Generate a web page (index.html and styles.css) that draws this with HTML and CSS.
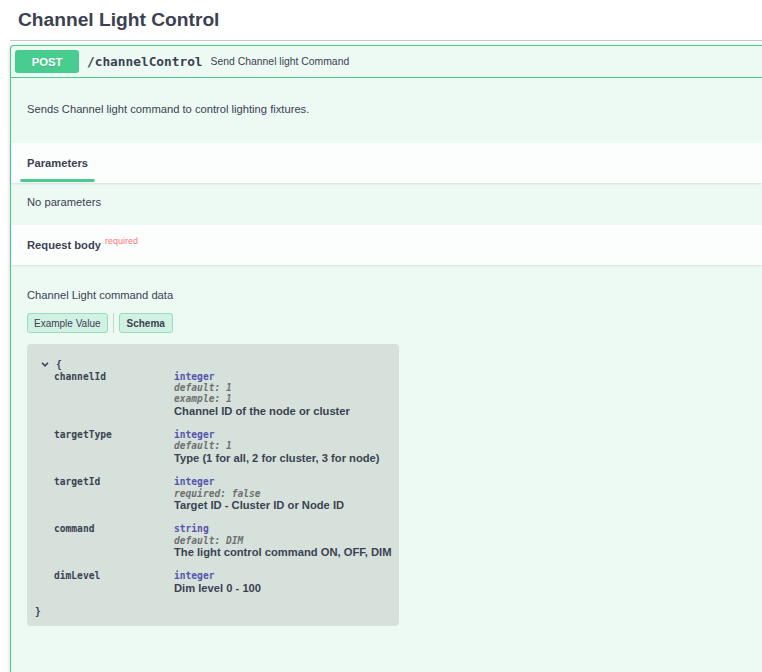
FILE: index.html
```html
<!DOCTYPE html>
<html lang="en">
<head>
<meta charset="utf-8">
<title>Channel Light Control</title>
<link rel="stylesheet" href="styles.css">
</head>
<body>
<div class="wrapper">
  <h3 class="tag">Channel Light Control</h3>
  <div class="opblock">
    <div class="summary">
      <span class="method">POST</span>
      <span class="path">/channelControl</span>
      <span class="summary-desc">Send Channel light Command</span>
    </div>
    <div class="description">
      <p>Sends Channel light command to control lighting fixtures.</p>
    </div>
    <div class="section-header">
      <h4 class="tab-title"><span class="tab-active">Parameters</span></h4>
    </div>
    <div class="params">
      <p>No parameters</p>
    </div>
    <div class="section-header">
      <h4 class="req-title">Request body<span class="required">required</span></h4>
    </div>
    <div class="body-content">
      <p class="body-desc">Channel Light command data</p>
      <div class="tabs">
        <button class="tab-btn">Example Value</button>
        <span class="tab-sep"></span>
        <button class="tab-btn active">Schema</button>
      </div>
      <div class="model-box">
        <div class="model-open">
          <svg class="chevron" viewBox="0 0 8 5" width="8" height="5"><polyline points="1,0.8 4,3.8 7,0.8" fill="none" stroke="#3b4151" stroke-width="1.6"/></svg>
          <span class="brace-open">{</span>
        </div>
        <div class="prop-row">
          <span class="prop-name">channelId</span>
          <div class="prop-val">
            <span class="prop-type">integer</span>
            <span class="prop-meta">default: 1</span>
            <span class="prop-meta">example: 1</span>
            <span class="prop-desc">Channel ID of the node or cluster</span>
          </div>
        </div>
        <div class="prop-row">
          <span class="prop-name">targetType</span>
          <div class="prop-val">
            <span class="prop-type">integer</span>
            <span class="prop-meta">default: 1</span>
            <span class="prop-desc">Type (1 for all, 2 for cluster, 3 for node)</span>
          </div>
        </div>
        <div class="prop-row">
          <span class="prop-name">targetId</span>
          <div class="prop-val">
            <span class="prop-type">integer</span>
            <span class="prop-meta">required: false</span>
            <span class="prop-desc">Target ID - Cluster ID or Node ID</span>
          </div>
        </div>
        <div class="prop-row">
          <span class="prop-name">command</span>
          <div class="prop-val">
            <span class="prop-type">string</span>
            <span class="prop-meta">default: DIM</span>
            <span class="prop-desc">The light control command ON, OFF, DIM</span>
          </div>
        </div>
        <div class="prop-row">
          <span class="prop-name">dimLevel</span>
          <div class="prop-val">
            <span class="prop-type">integer</span>
            <span class="prop-desc">Dim level 0 - 100</span>
          </div>
        </div>
        <div class="brace-close">}</div>
      </div>
    </div>
  </div>
</div>
</body>
</html>
```

FILE: styles.css
```css
html, body {
  margin: 0;
  padding: 0;
  background: #ffffff;
  overflow: hidden;
}

body {
  font-family: "Liberation Sans", Arial, sans-serif;
  color: #3b4151;
}

.wrapper {
  margin-left: 10px;
}

.tag {
  margin: 0 0 4px;
  padding: 8px 16px 8px 8px;
  font-size: 19.2px;
  line-height: 24px;
  font-weight: bold;
  border-bottom: 1px solid #c4c6cb;
}

.opblock {
  border: 1px solid #49cc90;
  border-right: 0;
  border-bottom: 0;
  border-radius: 4px 0 0 0;
  background: #edfaf4;
  box-shadow: -1px 0 3px rgba(0, 0, 0, 0.12);
  padding-bottom: 47px;
}

.summary {
  display: flex;
  align-items: center;
  padding: 4px;
  border-bottom: 1px solid #49cc90;
}

.method {
  display: flex;
  align-items: center;
  justify-content: center;
  min-width: 64px;
  height: 23px;
  border-radius: 3px;
  background: #49cc90;
  color: #ffffff;
  font-size: 11.2px;
  font-weight: bold;
  text-shadow: 0 1px 0 rgba(0, 0, 0, 0.1);
}

.path {
  padding: 0 8px;
  font-family: "DejaVu Sans Mono", monospace;
  font-weight: bold;
  font-size: 12.8px;
  color: #3b4151;
}

.summary-desc {
  font-size: 10.4px;
  color: #3b4151;
}

.description {
  padding: 24px 16px 27px;
}

.description p,
.params p,
.body-desc {
  margin: 0;
  font-size: 11.2px;
  line-height: 14px;
}

.section-header {
  display: flex;
  align-items: center;
  height: 40px;
  padding: 0 16px;
  background: rgba(255, 255, 255, 0.8);
  box-shadow: 0 1px 2px rgba(0, 0, 0, 0.1);
  position: relative;
}

.section-header h4 {
  margin: 0;
  font-size: 11.2px;
  line-height: 13px;
  font-weight: bold;
}

.req-title {
  padding-top: 2px;
}

.tab-active {
  position: relative;
  display: inline-block;
}

.tab-active::after {
  content: "";
  position: absolute;
  left: 50%;
  bottom: -12.5px;
  width: 120%;
  height: 3px;
  transform: translateX(-50%);
  background: #49cc90;
}

.params {
  padding: 12px 16px 16px;
}

.required {
  position: relative;
  top: -5px;
  padding: 0 4px;
  font-size: 9px;
  font-weight: normal;
  color: rgba(255, 0, 0, 0.6);
}

.body-content {
  padding: 23px 16px 0;
}

.tabs {
  display: flex;
  align-items: stretch;
  height: 20px;
  margin: 11px 0 11px;
}

.tab-btn {
  margin: 0;
  padding: 0 6px;
  height: 20px;
  border: 1px solid #96ddbc;
  border-radius: 3px;
  background: #d1f1e2;
  font-family: "Liberation Sans", Arial, sans-serif;
  font-size: 10px;
  color: #3b4151;
}

.tab-btn.active {
  font-weight: bold;
  padding: 0 7px;
}

.tab-sep {
  width: 1px;
  margin: 0 5px;
  background: #c9d6cf;
}

.model-box {
  width: 356px;
  padding: 14.5px 8px 8px;
  border-radius: 4px;
  background: #d6e1dc;
  font-family: "DejaVu Sans Mono", monospace;
  font-size: 9.6px;
  font-weight: bold;
}

.model-open {
  display: flex;
  align-items: center;
  height: 12px;
}

.chevron {
  margin-left: 6px;
}

.brace-open {
  margin-left: 7px;
  line-height: 12px;
}

.prop-row {
  display: grid;
  grid-template-columns: 120px 1fr;
  margin: 0 0 12.3px 19px;
}

.prop-name {
  line-height: 11.4px;
  color: #3b4151;
}

.prop-val {
  display: flex;
  flex-direction: column;
}

.prop-type {
  line-height: 11.4px;
  color: #5555aa;
}

.prop-meta {
  line-height: 11.4px;
  font-style: italic;
  color: #707070;
}

.prop-desc {
  font-family: "Liberation Sans", Arial, sans-serif;
  font-size: 11.2px;
  font-weight: bold;
  line-height: 12px;
  white-space: nowrap;
  color: #3b4151;
}

.brace-close {
  margin-top: 12.5px;
  line-height: 11.4px;
}
```
